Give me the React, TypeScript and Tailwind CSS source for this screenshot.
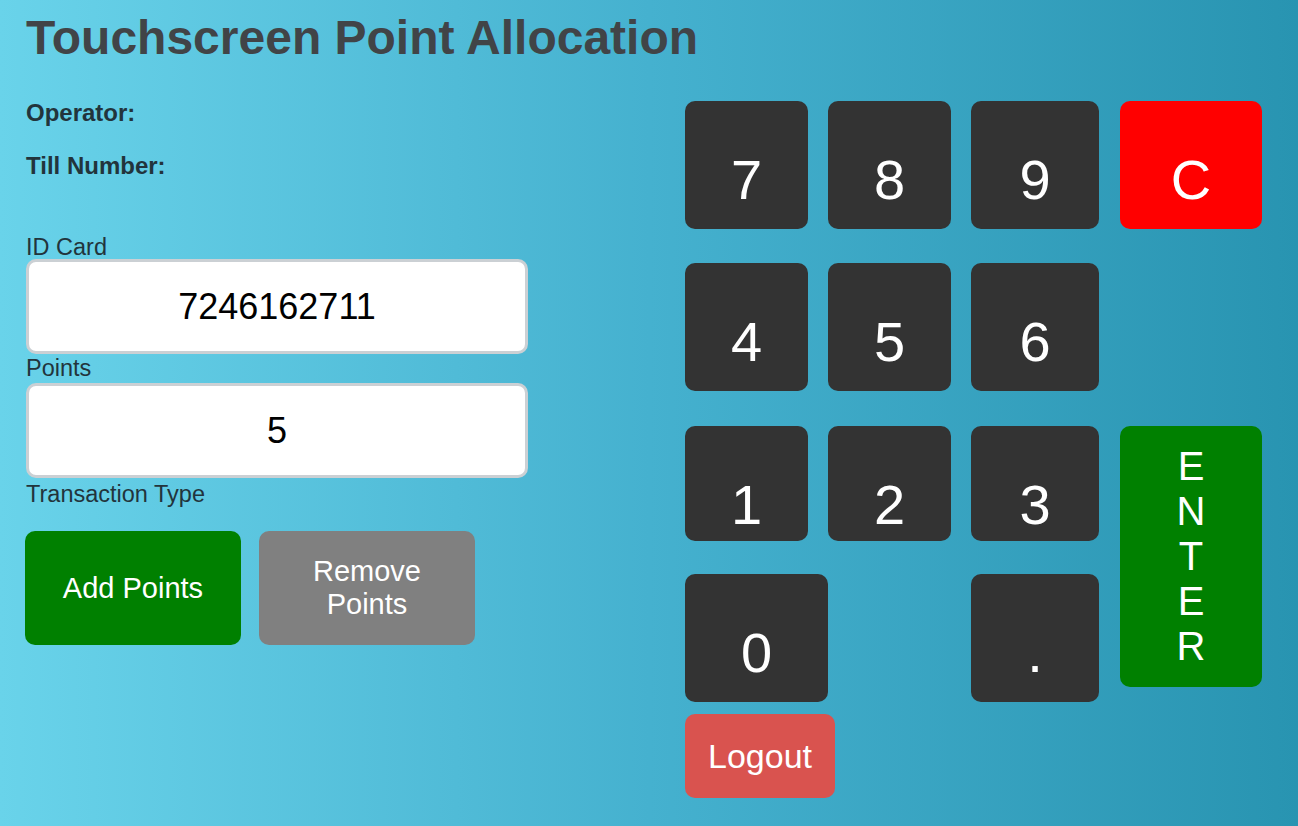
import React from "react";

const digitKey =
  "flex justify-center items-start bg-[#333333] rounded-[10px] text-white text-[56px] leading-[normal] pt-[46px]";

function Key({ label, className }: { label: string; className: string }) {
  return <button className={`${digitKey} ${className}`}>{label}</button>;
}

export default function App() {
  return (
    <div className="w-full h-[826px] overflow-hidden bg-gradient-to-r from-[#69d3ea] via-[#45b1cf] to-[#2894b1] font-['Liberation_Sans',Arial,sans-serif]">
      <h1 className="pt-[10px] pl-[26px] text-[48px] leading-[normal] font-bold text-[#414447]">
        Touchscreen Point Allocation
      </h1>

      <div className="flex mt-[34px]">
        {/* left column: operator info and form */}
        <div className="ml-[26px] w-[502px] flex flex-col text-[#22343c]">
          <div className="text-[24px] leading-[normal] font-bold">Operator:</div>
          <div className="mt-[25px] text-[24px] leading-[normal] font-bold">Till Number:</div>

          <label className="mt-[54px] text-[23.5px] leading-[normal]">ID Card</label>
          <input
            readOnly
            value="7246162711"
            className="-mt-[2px] h-[95px] w-full bg-white border-[3px] border-[#cbd0d4] rounded-[10px] text-center text-[36px] text-black outline-none"
          />

          <label className="mt-[1px] text-[23.5px] leading-[normal]">Points</label>
          <input
            readOnly
            value="5"
            className="mt-[1px] h-[95px] w-full bg-white border-[3px] border-[#cbd0d4] rounded-[10px] text-center text-[36px] text-black outline-none"
          />

          <label className="mt-[3px] text-[23.5px] leading-[normal]">Transaction Type</label>
          <div className="mt-[23px] flex gap-[18px] -ml-[1px]">
            <button className="w-[216px] h-[114px] rounded-[10px] bg-[#008000] text-white text-[29px] leading-[normal]">
              Add Points
            </button>
            <button className="w-[216px] h-[114px] rounded-[10px] bg-[#808080] text-white text-[29px] leading-[normal] px-10">
              Remove Points
            </button>
          </div>
        </div>

        {/* keypad */}
        <div className="ml-[157px] mt-[2px] flex flex-col">
          <div className="flex gap-x-[20px]">
            <Key label="7" className="w-[123px] h-[128px]" />
            <Key label="8" className="w-[123px] h-[128px]" />
            <Key label="9" className="w-[128px] h-[128px]" />
            <Key label="C" className="ml-px w-[142px] h-[128px] !bg-[#ff0000]" />
          </div>

          <div className="flex gap-x-[20px] mt-[34px]">
            <Key label="4" className="w-[123px] h-[128px]" />
            <Key label="5" className="w-[123px] h-[128px]" />
            <Key label="6" className="w-[128px] h-[128px]" />
          </div>

          <div className="flex gap-x-[21px] mt-[35px] items-start">
            <div className="flex flex-col w-[414px]">
              <div className="flex gap-x-[20px]">
                <Key label="1" className="w-[123px] h-[115px]" />
                <Key label="2" className="w-[123px] h-[115px]" />
                <Key label="3" className="w-[128px] h-[115px]" />
              </div>
              <div className="flex justify-between mt-[33px]">
                <Key label="0" className="w-[143px] h-[128px]" />
                <Key label="." className="w-[128px] h-[128px]" />
              </div>
            </div>
            <button className="w-[142px] h-[261px] rounded-[10px] bg-[#008000] text-white text-[40px] leading-[normal] flex flex-col items-center justify-center">
              <span>E</span>
              <span>N</span>
              <span>T</span>
              <span>E</span>
              <span>R</span>
            </button>
          </div>

          <button className="mt-[12px] w-[150px] h-[84px] rounded-[10px] bg-[#d9534f] text-white text-[34px] leading-[normal]">
            Logout
          </button>
        </div>
      </div>
    </div>
  );
}
